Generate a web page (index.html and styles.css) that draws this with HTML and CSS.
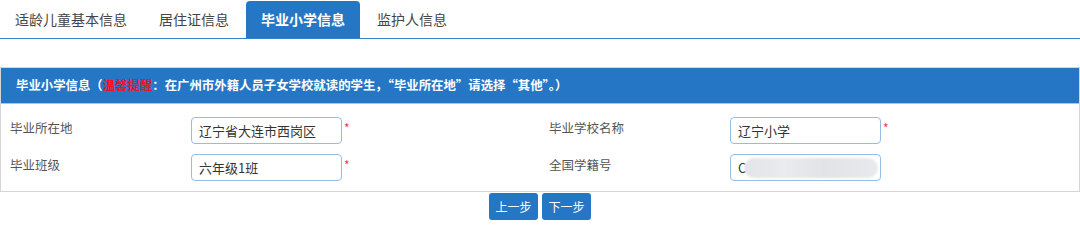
FILE: index.html
```html
<!DOCTYPE html>
<html lang="zh-CN">
<head>
<meta charset="utf-8">
<title>毕业小学信息</title>
<link rel="stylesheet" href="styles.css">
</head>
<body>
<ul class="tabs">
  <li class="tab">适龄儿童基本信息</li>
  <li class="tab">居住证信息</li>
  <li class="tab active">毕业小学信息</li>
  <li class="tab">监护人信息</li>
</ul>
<div class="panel">
  <div class="panel-head">毕业小学信息（<span class="warn">温馨提醒</span>：在广州市外籍人员子女学校就读的学生，“毕业所在地”请选择“其他”。）</div>
  <div class="panel-body">
    <div class="cell">
      <span class="label">毕业所在地</span>
      <div class="field">辽宁省大连市西岗区</div>
      <span class="req">*</span>
    </div>
    <div class="cell">
      <span class="label">毕业学校名称</span>
      <div class="field">辽宁小学</div>
      <span class="req">*</span>
    </div>
    <div class="cell">
      <span class="label">毕业班级</span>
      <div class="field">六年级1班</div>
      <span class="req">*</span>
    </div>
    <div class="cell">
      <span class="label">全国学籍号</span>
      <div class="field">C<span class="blur"></span></div>
    </div>
  </div>
</div>
<div class="actions">
  <button class="btn">上一步</button>
  <button class="btn">下一步</button>
</div>
</body>
</html>
```
FILE: styles.css
```css
html, body {
  margin: 0;
  padding: 0;
  background: #fff;
}
body {
  width: 1080px;
  font-family: "Noto Sans CJK SC", "Noto Sans", sans-serif;
  color: #333;
}
.tabs {
  display: flex;
  list-style: none;
  margin: 0;
  padding: 1px 0 0 0;
  border-bottom: 1px solid #3284cf;
}
.tab {
  height: 37px;
  line-height: 37px;
  padding: 0 15px;
  margin-right: 2px;
  font-size: 14px;
  color: #444;
  border-radius: 4px 4px 0 0;
}
.tab.active {
  background: #2577c5;
  color: #fff;
  font-weight: bold;
}
.panel {
  margin-top: 28px;
  border: 1px solid #d6d6d6;
}
.panel-head {
  height: 35px;
  line-height: 35px;
  padding-left: 15px;
  background: #2577c5;
  border-bottom: 1px solid #a4c7ea;
  color: #fff;
  font-size: 12.4px;
  font-weight: bold;
  white-space: nowrap;
}
.warn {
  color: #ff0a2a;
}
.panel-body {
  display: grid;
  grid-template-columns: 539px 1fr;
  row-gap: 10px;
  padding: 13px 0 10px 0;
}
.cell {
  display: flex;
  align-items: flex-start;
}
.label {
  width: 181px;
  padding-left: 9px;
  line-height: 22px;
  font-size: 12.5px;
  color: #555;
}
.field {
  box-sizing: border-box;
  width: 151px;
  height: 27px;
  line-height: 25px;
  padding: 0 7px;
  border: 1px solid #94bde6;
  border-radius: 4px;
  font-size: 13px;
  color: #333;
  white-space: nowrap;
  overflow: hidden;
}
.req {
  margin-left: 2px;
  font-size: 12px;
  line-height: 22px;
  color: #f0365a;
}
.blur {
  display: inline-block;
  width: 134px;
  height: 20px;
  margin-left: -2px;
  vertical-align: -5px;
  border-radius: 10px;
  background: linear-gradient(90deg, #e3e4e7 0%, #eaebee 30%, #e2e3e6 60%, #e9eaed 100%);
  filter: blur(1.2px);
}
.actions {
  display: flex;
  justify-content: center;
  gap: 4px;
  margin-top: 1px;
}
.btn {
  width: 49px;
  height: 27px;
  padding: 0;
  border: none;
  border-radius: 3px;
  background: #2577c5;
  color: #fff;
  font-family: "Noto Sans CJK SC", sans-serif;
  font-size: 12px;
  line-height: 27px;
}
```
